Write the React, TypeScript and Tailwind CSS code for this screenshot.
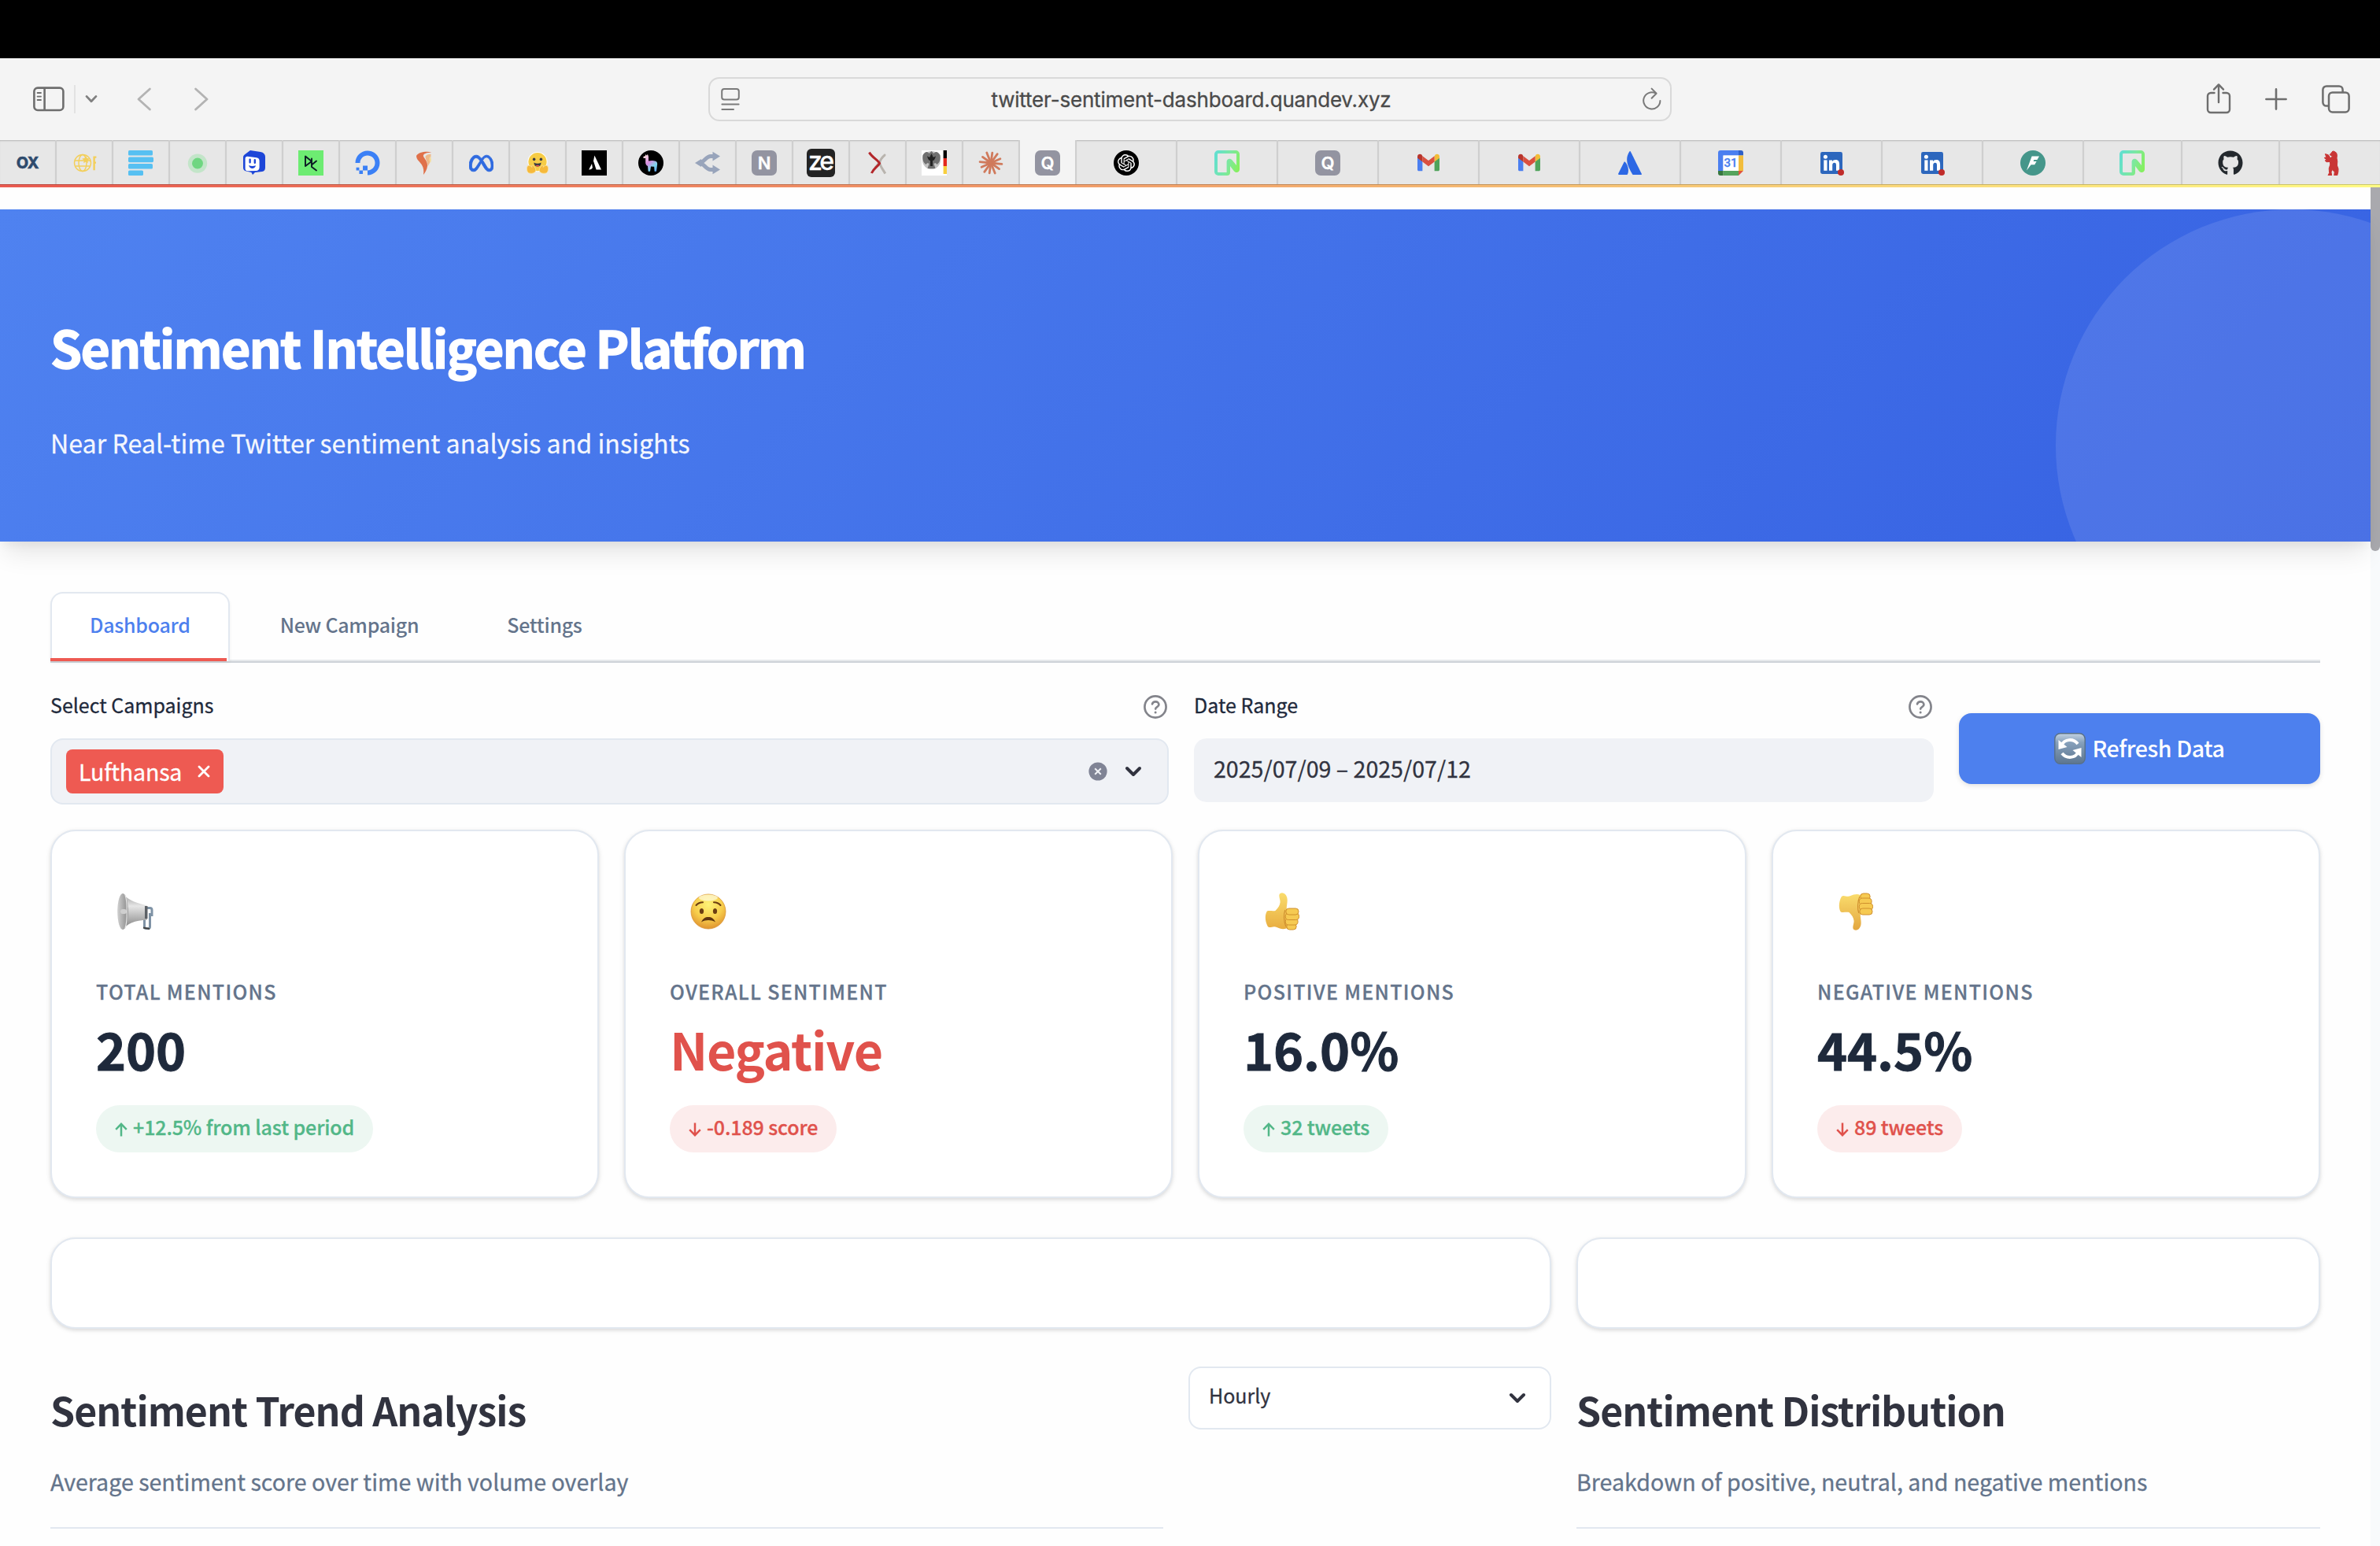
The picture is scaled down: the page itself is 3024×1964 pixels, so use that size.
import type { ReactNode } from "react";
import { FaAtlassian, FaDigitalOcean, FaGithub } from "react-icons/fa";
import { SiMeta, SiOpenai } from "react-icons/si";

/* ---------- browser toolbar icons ---------- */

function SidebarIcon() {
  return (
    <svg className="h-[32px] w-[40px]" viewBox="0 0 40 32" fill="none" stroke="#6e6e6e" strokeWidth="2.6">
      <rect x="1.4" y="1.6" width="37" height="28.4" rx="4.5" />
      <path d="M14.6 2v28" />
      <path d="M5.6 8h4.4M5.6 12.6h4.4M5.6 17h4.4" strokeWidth="1.8" strokeLinecap="round" />
    </svg>
  );
}

function ReaderIcon() {
  return (
    <svg className="h-[30px] w-[24px]" viewBox="0 0 24 30" fill="none" stroke="#7a7a7a" strokeWidth="2" strokeLinecap="round">
      <rect x="1.2" y="2" width="21.6" height="13.4" rx="3" />
      <path d="M1.4 21.4h21.2M1.4 28h14.6" />
    </svg>
  );
}

function ReloadIcon() {
  return (
    <svg className="h-[30px] w-[24px]" viewBox="0 0 24 30" fill="none" stroke="#7a7a7a" strokeWidth="2" strokeLinecap="round" strokeLinejoin="round">
      <path d="M16.6 7.4A10.6 10.6 0 1 0 22.4 17" />
      <path d="M11.6 1.6l6 6.2-6 6" />
    </svg>
  );
}

function ShareIcon() {
  return (
    <svg className="h-[40px] w-[32px]" viewBox="0 0 32 40" fill="none" stroke="#6e6e6e" strokeWidth="2.4" strokeLinecap="round" strokeLinejoin="round">
      <path d="M10.5 13H6a4 4 0 0 0-4 4v17a4 4 0 0 0 4 4h20a4 4 0 0 0 4-4V17a4 4 0 0 0-4-4h-4.5" />
      <path d="M16 25V3M10 8.6L16 2.4l6 6.2" />
    </svg>
  );
}

function PlusIcon() {
  return (
    <svg className="h-[28px] w-[28px]" viewBox="0 0 28 28" fill="none" stroke="#6e6e6e" strokeWidth="2.6" strokeLinecap="round">
      <path d="M14 1.4v25.2M1.4 14h25.2" />
    </svg>
  );
}

function TabsIcon() {
  return (
    <svg className="h-[36px] w-[36px]" viewBox="0 0 36 36" fill="none" stroke="#6e6e6e" strokeWidth="2.5">
      <rect x="9" y="9.4" width="25.6" height="25" rx="4.6" />
      <path d="M9 26.6H6A4.5 4.5 0 0 1 1.4 22V6A4.6 4.6 0 0 1 6 1.4h16A4.6 4.6 0 0 1 26.6 6v3.4" />
    </svg>
  );
}

/* ---------- favicons ---------- */

const Fav = ({ children }: { children: ReactNode }) => (
  <svg className="h-[32px] w-[32px]" viewBox="0 0 32 32" fill="none">
    {children}
  </svg>
);

const LetterIcon = ({ letter }: { letter: string }) => (
  <span className="flex h-[32px] w-[32px] items-center justify-center rounded-[7px] bg-[#9394a1] font-['Inter'] text-[22px] leading-none font-semibold text-white">
    {letter}
  </span>
);

const GlobeIcon = () => (
  <Fav>
    <g stroke="#f3cf5b" strokeWidth="1.4">
      <circle cx="14" cy="16" r="10.5" />
      <ellipse cx="14" cy="16" rx="5" ry="10.5" />
      <path d="M4 13h20M5 20h18" />
    </g>
    <path d="M18 7l1.6 3 3.4.6-2.6 2.2.4 3.4-2.8-1.8-2.8 1.8.6-3.4-2.6-2.2 3.2-.6z" fill="#f3cf5b" />
    <path d="M28.6 7.6v17.6M28.6 8.6h2.8M28.6 15.6h2.4" stroke="#f3cf5b" strokeWidth="2.4" />
  </Fav>
);

const BarsIcon = () => (
  <Fav>
    <g fill="#56c0f2">
      <rect x="0" y="0" width="31" height="6.6" rx="1.6" />
      <rect x="0" y="8.6" width="32" height="6.6" rx="1.6" />
      <rect x="0" y="17" width="31" height="6.6" rx="1.6" />
      <rect x="0" y="25.4" width="19" height="6.6" rx="1.6" />
    </g>
  </Fav>
);

const DotIcon = () => (
  <Fav>
    <circle cx="16" cy="16.6" r="12.2" fill="#c3e5c9" />
    <circle cx="16" cy="16.6" r="7" fill="#6fd681" />
  </Fav>
);

const BoxFaceIcon = () => (
  <Fav>
    <path d="M5 4.5L11 0l13 2c4 .8 6 3 6 6v14c0 3-1.4 4.4-4 5l-9 1-3 3-1.6-3L6 26.6C3.4 26 2 24.6 2 22V9c0-2 1-3.400 3-4.500z" fill="#1d46d8" />
    <path d="M4.600 10.500c0-2 1.400-3 3-2.700L19 9.200c2.400.4 3.600 1.600 3.600 4v8c0 2.800-1.200 4.400-3.600 4.800l-11 .2c-2.200 0-3.400-1-3.400-3z" fill="#fff" />
    <path d="M10.600 11.600v3.600M16.800 12.200v3.600" stroke="#1d46d8" strokeWidth="2.4" strokeLinecap="round" />
    <path d="M9 19c3 1.200 6 1.200 9 .2-.6 2.600-2.400 3.800-4.400 3.800S9.800 21.600 9 19z" fill="#1d46d8" />
  </Fav>
);

const GreenKIcon = () => (
  <Fav>
    <rect width="32" height="32" fill="#6dec72" />
    <path d="M9 7.500v12.600l8-6.200zM17 10.500v10.500l6 4.500M17 18.500l6-5" stroke="#0c1a24" strokeWidth="1.900" strokeLinecap="round" strokeLinejoin="round" />
  </Fav>
);

const FlameIcon = () => (
  <Fav>
    <path d="M6 7c2.400-4.600 12-6.400 19.400-4.600-6 .4-11.400 1.600-10.400 5.200 1 3 5.600 6.400 5 12.400-.4 4-2.400 7.600-5 11 .6-5 .4-8.600-2-12.600C11 15 6 12 6 7z" fill="#e0714a" />
    <path d="M17.600 7.400c2-2 4.600-2.600 7-2.600-.4 6-.6 11-4 15.600.4-5-3.600-9.400-3-13z" fill="#efb98a" />
    <path d="M23 8c2 1 2.400 4 1 8-1.600-2-2-5-1-8z" fill="#f4dc9a" />
  </Fav>
);

const HugIcon = () => (
  <Fav>
    <circle cx="16" cy="14.600" r="12.600" fill="#fff" />
    <circle cx="16" cy="14.600" r="11.600" fill="#f6cc46" />
    <circle cx="11.600" cy="11.400" r="1.800" fill="#3a3b45" />
    <circle cx="20.400" cy="11.400" r="1.800" fill="#3a3b45" />
    <path d="M11.400 15.600c3 1.600 6.200 1.600 9.200 0-.2 3.400-2 5.200-4.600 5.200s-4.400-1.800-4.600-5.200z" fill="#3a3b45" />
    <path d="M13.600 19.600c1.400-1 3.400-1 4.800 0-1.200 1.400-3.600 1.400-4.800 0z" fill="#ef5350" />
    <path d="M3 20.600c-1 2-.8 7.600 2.600 8.400 4 .8 7.400-.2 8.200-3.400.4-2.600-1.800-4.600-3.600-6.600-1.200-.6-1.800.6-1.200 2.400-2-2-4.800-3.400-6-.8zM29 20.600c1 2 .8 7.600-2.600 8.400-4 .8-7.400-.2-8.200-3.400-.4-2.600 1.800-4.600 3.600-6.600 1.200-.6 1.800.6 1.200 2.400 2-2 4.800-3.400 6-.8z" fill="#f6b93b" stroke="#fbe3a0" strokeWidth=".8" />
  </Fav>
);

const AIcon = () => (
  <Fav>
    <rect width="32" height="32" fill="#000" />
    <path d="M16.400 6.500L25 24.500h-6.400l-3.600-11z" fill="#fff" />
    <path d="M13 17l.8 4.500c.2 1.500-1.500 3-4.600 3z" fill="#fff" />
  </Fav>
);

const LlamaIcon = () => (
  <Fav>
    <defs>
      <linearGradient id="llama" x1="8" y1="6" x2="25" y2="26" gradientUnits="userSpaceOnUse">
        <stop offset="0" stopColor="#f7e3da" />
        <stop offset=".4" stopColor="#d88be0" />
        <stop offset=".7" stopColor="#7fd6ec" />
        <stop offset="1" stopColor="#5a9bf0" />
      </linearGradient>
    </defs>
    <circle cx="16" cy="16" r="16" fill="#000" />
    <path d="M9 5l1.400 1.600L12 5l1 3v5.600c3-.6 6-.8 9 .2 2 .6 2.600 3 2 5l-1 8h-2.400l-.4-6-4.200-.4-1 6.400h-2.400l-.6-6.800C9.400 19 9 16.600 9.200 14V10H6.600l-.2-2L9 7z" fill="url(#llama)" />
  </Fav>
);

const ForkIcon = () => (
  <Fav>
    <path d="M23 7.500h-3c-6.500 0-8 8.500-15.500 8.500C12 16 13.500 24.500 20 24.500h3" stroke="#98a4bb" strokeWidth="5" />
    <path d="M0 16l8-5v10zM22.500 1.800L32 7.500l-9.500 6zM22.500 18.500l9.500 6-9.500 5.800z" fill="#98a4bb" />
  </Fav>
);

const CrossIcon = () => (
  <Fav>
    <path d="M25.600 5.600c-3 2.400-6 6.200-6.800 9.400-.6 4 3.600 8.400 7 14.400" stroke="#b9b4ae" strokeWidth="3" />
    <path d="M26 5c-6 6-9 12-13.600 17" stroke="#b9b4ae" strokeWidth="2" />
    <path d="M5.400 2.600C9.400 9 17 13 18.600 16.500 16 21 11 23 8.400 29" stroke="#b3272b" strokeWidth="3" strokeLinejoin="round" />
  </Fav>
);

const EagleIcon = () => (
  <Fav>
    <rect width="32" height="32" fill="#fff" />
    <ellipse cx="12.500" cy="12.500" rx="11.500" ry="11.500" fill="#c4c4c4" />
    <path d="M1.500 6c3-5 6-5 8-2l3-3 3 3c2-3 5-3 8 2 1 5-1 10-4 12-1-2-3-2-4-1l2 6h-10l2-6c-1-1-3-1-4 1-3-2-5-7-4-12z" fill="#707070" />
    <path d="M7 7c2 2 4 2 4 0l1.500-3L14 7c0 2 2 2 4 0-1 4-2 6-4 6v7h-3v-7c-2 0-3-2-4-6z" fill="#222" />
    <rect x="27.600" width="4.400" height="10" fill="#000" />
    <rect x="27.600" y="10" width="4.400" height="10" fill="#e3281d" />
    <rect x="27.600" y="20" width="4.400" height="10" fill="#f8cf3e" />
  </Fav>
);

const rays = [0, 28, 58, 88, 118, 150, 180, 208, 238, 268, 298, 330];
const BurstIcon = () => (
  <Fav>
    <g stroke="#d07a5c" strokeWidth="2.800" strokeLinecap="round">
      {rays.map((r, i) => (
        <path key={r} d={i % 2 ? "M16 16V2" : "M16 16V3"} transform={`rotate(${r + 8} 16 16)`} />
      ))}
    </g>
  </Fav>
);

const NeonIcon = ({ id }: { id: string }) => (
  <Fav>
    <defs>
      <linearGradient id={id} x1="0" y1="10" x2="32" y2="20" gradientUnits="userSpaceOnUse">
        <stop offset="0" stopColor="#62dfd0" />
        <stop offset=".55" stopColor="#7ce8a0" />
        <stop offset="1" stopColor="#86f05c" />
      </linearGradient>
    </defs>
    <path
      fillRule="evenodd"
      d="M5 0h22a5 5 0 0 1 5 5v19c0 4-4.800 5.400-7.200 2.200L20 20v8a4 4 0 0 1-4 4H5a5 5 0 0 1-5-5V5a5 5 0 0 1 5-5zm0 4a1 1 0 0 0-1 1v22a1 1 0 0 0 1 1h10.600V14.600c0-4 4.600-5 7-2L28 19V5c0-.8 0-1-1-1z"
      fill={`url(#${id})`}
    />
  </Fav>
);

const GmailIcon = () => (
  <Fav>
    <path d="M2 9v15.400c0 1 .8 1.800 1.800 1.800H8.400V14z" fill="#4b7ff0" />
    <path d="M30 9v15.400c0 1-.8 1.800-1.800 1.800h-4.600V14z" fill="#4fa35b" />
    <path d="M23.600 7.400V14.400L30 9.800V8c0-3-3.200-4-5.400-2.400z" fill="#f1bc37" />
    <path d="M8.400 14.400V7.200L16 13l7.600-5.800v7.200L16 20.200z" fill="#da4f3f" />
    <path d="M2 8v1.800l6.400 4.800V7.400l-1-1.800C5.200 4 2 5 2 8z" fill="#b8352c" />
  </Fav>
);

const CalendarIcon = () => (
  <span className="relative flex h-[32px] w-[32px] items-center justify-center">
    <svg className="absolute inset-0 h-[32px] w-[32px]" viewBox="0 0 32 32">
      <path d="M3 0h23v6.500H6.500V26H0V3a3 3 0 0 1 3-3z" fill="#4b7ff0" />
      <path d="M26 0h3a3 3 0 0 1 3 3v3.500h-6z" fill="#2f60c8" />
      <path d="M26 6.500h6V26h-6z" fill="#f2bd3c" />
      <path d="M6.500 26H26v6H6.500z" fill="#55a35c" />
      <path d="M0 26h6.500v6H3a3 3 0 0 1-3-3z" fill="#37783f" />
      <path d="M26 26h6l-6 6z" fill="#e0533f" />
      <path d="M6.500 6.500H26V26H6.500z" fill="#fff" />
    </svg>
    <span className="relative font-['Roboto'] text-[15px] leading-none font-medium text-[#4b7ff0]">31</span>
  </span>
);

const LinkedInIcon = () => (
  <Fav>
    <rect x="2" y="2" width="28" height="28" rx="2.400" fill="#2d67bd" />
    <g fill="#fff">
      <circle cx="8.400" cy="8.200" r="2.500" />
      <rect x="6.300" y="12.400" width="4.200" height="13.400" />
      <path d="M13 12.400h4v1.900c.8-1.400 2.200-2.200 4.200-2.200 4 0 4.900 2.600 4.900 6.200v7.500H22v-6.700c0-1.700-.2-3.400-2.200-3.400s-2.600 1.500-2.600 3.300v6.800H13z" />
    </g>
    <circle cx="28" cy="28" r="4" fill="#c02c2a" />
  </Fav>
);

const BoltIcon = () => (
  <Fav>
    <circle cx="16" cy="16" r="16" fill="#45968a" />
    <path d="M14.600 7.400h9.400l-2.600 4.600h-4l-.8 2h4l-2.400 4.200h-4.600L8 25.600z" fill="#fff" />
  </Fav>
);

const BearIcon = () => (
  <Fav>
    <path d="M15.500 2.800L17 1l2 .4 2.600 1.800.8 3-.4 3.800.8 4-.4 5 1.600 4.500-.2 4-1.200 4.500h-3.800l.4-4.500-2.800-3-1.400 3 .6 4.500H11l1.600-3.500-.4-5.500 1.600-5-.4-3.500-4.400.2-1.800-1.800 2-1-3-2.400 2.600-.8L7.400 4.600l4 1.200 2.600 4 2.600-2-3.400-2.200z" fill="#c93434" stroke="#c93434" strokeWidth="1" strokeLinejoin="round" />
  </Fav>
);

const smallTabs: { icon: ReactNode; active?: boolean }[] = [
  { icon: <span className="font-['Inter'] text-[20px] leading-none font-extrabold tracking-[-0.5px] text-[#2f4b6d]">OX</span> },
  { icon: <GlobeIcon /> },
  { icon: <BarsIcon /> },
  { icon: <DotIcon /> },
  { icon: <BoxFaceIcon /> },
  { icon: <GreenKIcon /> },
  { icon: <FaDigitalOcean className="h-[32px] w-[32px] text-[#3b80f6]" /> },
  { icon: <FlameIcon /> },
  { icon: <SiMeta className="h-[31px] w-[31px] stroke-[#2f6ae0] stroke-[0.7] text-[#2f6ae0]" /> },
  { icon: <HugIcon /> },
  { icon: <AIcon /> },
  { icon: <LlamaIcon /> },
  { icon: <ForkIcon /> },
  { icon: <LetterIcon letter="N" /> },
  {
    icon: (
      <span className="flex h-[36px] w-[36px] items-center justify-center rounded-[6px] bg-[#232323] pr-[2px] pb-[5px] font-['Inter'] text-[32px] leading-none font-medium tracking-[-3px] text-white">
        ze
      </span>
    ),
  },
  { icon: <CrossIcon /> },
  { icon: <EagleIcon /> },
  { icon: <BurstIcon /> },
  { icon: <LetterIcon letter="Q" />, active: true },
];

const wideTabs: ReactNode[] = [
  <span className="flex h-[32px] w-[32px] items-center justify-center rounded-full bg-black">
    <SiOpenai className="h-[22px] w-[22px] text-white" />
  </span>,
  <NeonIcon id="neon-a" />,
  <LetterIcon letter="Q" />,
  <GmailIcon />,
  <GmailIcon />,
  <FaAtlassian className="h-[30px] w-[30px] text-[#2d68e4]" />,
  <CalendarIcon />,
  <LinkedInIcon />,
  <LinkedInIcon />,
  <BoltIcon />,
];

const trailingTabs: ReactNode[] = [<NeonIcon id="neon-b" />, <FaGithub className="h-[32px] w-[32px] text-[#24292e]" />, <BearIcon />];

function BrowserChrome() {
  return (
    <>
      <div className="h-[74px] bg-black" />
      <div className="grid h-[104px] grid-cols-[900px_1224px_900px] items-center bg-[#f4f4f4]">
        <div className="flex items-center pl-[42px]">
          <SidebarIcon />
          <span className="ml-[12px] h-[36px] w-[2px] bg-[#e3e3e3]" />
          <svg className="ml-[12px] h-[12px] w-[16px]" viewBox="0 0 16 12" fill="none" stroke="#808080" strokeWidth="2.8" strokeLinecap="round" strokeLinejoin="round">
            <path d="M2 2.400l6 6.400 6-6.400" />
          </svg>
          <svg className="ml-[49px] h-[30px] w-[20px]" viewBox="0 0 20 30" fill="none" stroke="#b3b3b3" strokeWidth="2.800" strokeLinecap="round" strokeLinejoin="round">
            <path d="M17.400 2L3 15l14.400 13" />
          </svg>
          <svg className="ml-[53px] h-[30px] w-[20px]" viewBox="0 0 20 30" fill="none" stroke="#b3b3b3" strokeWidth="2.800" strokeLinecap="round" strokeLinejoin="round">
            <path d="M2.600 2L17 15 2.600 28" />
          </svg>
        </div>
        <div className="flex h-[56px] items-center justify-between rounded-[14px] border-2 border-[#d9d9d9] pr-[11px] pl-[14px]">
          <ReaderIcon />
          <span className="mt-[2px] font-['Inter'] text-[26px] leading-[32px] tracking-[-0.19px] text-[#4a4a4a]">twitter-sentiment-dashboard.quandev.xyz</span>
          <ReloadIcon />
        </div>
        <div className="flex items-center justify-end pr-[38px]">
          <span className="-mt-[3px] flex">
            <ShareIcon />
          </span>
          <span className="ml-[43px] flex">
            <PlusIcon />
          </span>
          <span className="ml-[44px] flex">
            <TabsIcon />
          </span>
        </div>
      </div>
      <div className="flex h-[56px] bg-[#e7e7e7]">
        {smallTabs.map((t, i) => (
          <div
            key={i}
            className={
              t.active
                ? "flex w-[72px] shrink-0 items-center justify-center border-r-2 border-[#cfcfcf] bg-[#f4f4f4] pt-[2px]"
                : "flex w-[72px] shrink-0 items-center justify-center border-r-2 border-[#cfcfcf] pt-[2px] shadow-[inset_0_2px_2px_-1px_rgba(0,0,0,0.22)]"
            }
          >
            {t.icon}
          </div>
        ))}
        {wideTabs.map((icon, i) => (
          <div
            key={i}
            className="flex w-[128px] shrink-0 items-center justify-center border-r-2 border-[#cfcfcf] pt-[2px] shadow-[inset_0_2px_2px_-1px_rgba(0,0,0,0.22)]"
          >
            {icon}
          </div>
        ))}
        {trailingTabs.map((icon, i) => (
          <div
            key={i}
            className="flex flex-1 items-center justify-center border-r-2 border-[#cfcfcf] pt-[2px] shadow-[inset_0_2px_2px_-1px_rgba(0,0,0,0.22)] last:border-r-0 last:pl-[4px]"
          >
            {icon}
          </div>
        ))}
      </div>
      <div className="h-[4px] border-t border-black/20 bg-[linear-gradient(90deg,#ea5a50,#f2a46c_50%,#fffb84)] bg-origin-border" />
    </>
  );
}

/* ---------- dashboard pieces ---------- */

const Chevron = () => (
  <svg className="h-[16px] w-[24px]" viewBox="0 0 24 16" fill="none" stroke="#31333f" strokeWidth="4" strokeLinecap="round" strokeLinejoin="round">
    <path d="M4 4l8 8 8-8" />
  </svg>
);

const HelpIcon = () => (
  <svg className="h-[32px] w-[32px]" viewBox="0 0 32 32" fill="none" stroke="#83848b" strokeWidth="2.700" strokeLinecap="round" strokeLinejoin="round">
    <circle cx="16" cy="16" r="13.600" />
    <path d="M12 12.400c.6-2 2.200-3 4.200-3 2.400 0 4.200 1.600 4.200 3.800 0 2.800-4.200 3-4.200 5.400" />
    <path d="M16.100 22.900v.1" strokeWidth="3" />
  </svg>
);

const Megaphone = () => (
  <svg className="h-[48px] w-[48px]" viewBox="0 0 48 48">
    <defs>
      <linearGradient id="horn" x1="0" y1="0" x2="0" y2="1">
        <stop offset="0" stopColor="#9b9b9b" />
        <stop offset=".35" stopColor="#e6e6e6" />
        <stop offset="1" stopColor="#7e7e7e" />
      </linearGradient>
      <linearGradient id="bell" x1="0" y1="0" x2="1" y2="0">
        <stop offset="0" stopColor="#d0d0d0" />
        <stop offset="1" stopColor="#8a8a8a" />
      </linearGradient>
    </defs>
    <path d="M39 19.500h4.500c1.500 0 2.500 1 2.500 2.500v6.500h-2.500M36.500 28v15c0 1.500.5 2.500 2 2.500h3c1.500 0 2-1 2-2.500V26" fill="none" stroke="#7f93a6" strokeWidth="3" />
    <path d="M35 44.500l8 1.500" stroke="#444" strokeWidth="2" />
    <path d="M9 1c4 6 12 11 31 15.500v18C24 35 14 40 9 47z" fill="url(#horn)" />
    <path d="M37 17h3.500v16H37z" fill="#5d6166" />
    <ellipse cx="9" cy="24" rx="6.800" ry="23" fill="url(#bell)" />
    <path d="M12 3c3 8 3 34 0 42" stroke="#e6e6e6" strokeWidth="1.200" fill="none" />
    <rect x="6" y="21" width="8" height="6" rx="3" fill="#cfcfcf" />
  </svg>
);

const WorriedFace = () => (
  <svg className="h-[46px] w-[46px]" viewBox="0 0 46 46">
    <defs>
      <radialGradient id="face" cx=".5" cy=".3" r=".75">
        <stop offset="0" stopColor="#fdf377" />
        <stop offset=".55" stopColor="#f7cd4b" />
        <stop offset="1" stopColor="#dc8a2c" />
      </radialGradient>
    </defs>
    <circle cx="23" cy="23" r="22" fill="url(#face)" stroke="#d99536" strokeWidth=".8" />
    <ellipse cx="23" cy="5.500" rx="12" ry="4" fill="#fffbe0" opacity=".7" />
    <path d="M7.500 15c2-2.200 5-3.600 8.500-3.700M38.500 15c-2-2.200-5-3.600-8.500-3.700" stroke="#6b3d12" strokeWidth="2" fill="none" strokeLinecap="round" />
    <ellipse cx="14.500" cy="22.500" rx="2.600" ry="3.600" fill="#6b3d12" />
    <ellipse cx="31.500" cy="22.500" rx="2.600" ry="3.600" fill="#6b3d12" />
    <path d="M14 36.500c2-4.600 5-6.500 9-6.500s7 1.900 9 6.500c-3-1.800-6-2.500-9-2.500s-6 .7-9 2.500z" fill="#5f3510" />
  </svg>
);

const Thumb = ({ down }: { down?: boolean }) => (
  <svg className="h-[48px] w-[44px]" viewBox="0 0 46 48" preserveAspectRatio="none">
    <defs>
      <linearGradient id={down ? "thumb-d" : "thumb-u"} x1="0" y1="0" x2="0" y2="1">
        <stop offset="0" stopColor={down ? "#e3a640" : "#fadc6c"} />
        <stop offset="1" stopColor={down ? "#fadc6c" : "#e8ad40"} />
      </linearGradient>
    </defs>
    <g transform={down ? "matrix(1 0 0 -1 0 48)" : undefined}>
      <path
        d="M3 23.500c3-1.200 7 .3 11-.5 4-3.500 6-7 6.500-11C20.500 8 17.500 3 20.500 1c3.500-2 7.500.5 9 5 1.300 5-.5 9.500-.5 14l3 23c-4 4.500-11 3.500-16 1-5-2.500-9 2-12-1C0 36 0 28 3 23.500z"
        fill={down ? "url(#thumb-d)" : "url(#thumb-u)"}
      />
      <g fill="#f6ca52" stroke="#cf8d2c" strokeWidth="1">
        <rect x="29" y="39" width="13" height="8" rx="4" />
        <rect x="27.500" y="32.500" width="16.500" height="8.500" rx="4.200" />
        <rect x="27.500" y="26" width="18" height="8.500" rx="4.200" />
        <rect x="28" y="20" width="17" height="8" rx="4" />
      </g>
      <path d="M27 22c-2 5-2 14 1 21" stroke="#cf8f2e" strokeWidth="1.200" fill="none" />
    </g>
  </svg>
);

const RefreshEmoji = () => (
  <svg className="h-[40px] w-[40px]" viewBox="0 0 40 40">
    <defs>
      <linearGradient id="key" x1="0" y1="0" x2="0" y2="1">
        <stop offset="0" stopColor="#c3d3e2" />
        <stop offset=".3" stopColor="#86a0bb" />
        <stop offset="1" stopColor="#5d7690" />
      </linearGradient>
    </defs>
    <rect x=".8" y=".8" width="38.400" height="38.400" rx="7" fill="url(#key)" stroke="#587089" strokeWidth="1.400" />
    <g fill="none" stroke="#fff" strokeWidth="4">
      <path d="M9.500 15.500C13 8 24 6.500 30 14" />
      <path d="M30.500 24.500C27 32 16 33.500 10 26" />
    </g>
    <path d="M5.500 9v12l11-3zM34.500 31V19l-11 3z" fill="#fff" />
  </svg>
);

const Arrow = ({ down }: { down?: boolean }) => (
  <svg className="mt-[2px] h-[18px] w-[16px]" viewBox="0 0 16 18" fill="none" stroke="currentColor" strokeWidth="2.500">
    <path d={down ? "M8 .5v15.500M1.200 9.200L8 16.200l6.800-7" : "M8 17.500V2M1.200 8.800L8 1.800l6.800 7"} />
  </svg>
);

type Metric = { icon: ReactNode; label: string; value: string; delta: string; up: boolean; negative?: boolean };

const metrics: Metric[] = [
  { icon: <Megaphone />, label: "TOTAL MENTIONS", value: "200", delta: "+12.5% from last period", up: true },
  { icon: <WorriedFace />, label: "OVERALL SENTIMENT", value: "Negative", delta: "-0.189 score", up: false, negative: true },
  { icon: <Thumb />, label: "POSITIVE MENTIONS", value: "16.0%", delta: "32 tweets", up: true },
  { icon: <Thumb down />, label: "NEGATIVE MENTIONS", value: "44.5%", delta: "89 tweets", up: false },
];

const MetricCard = ({ m }: { m: Metric }) => (
  <div className="flex h-[468px] flex-col items-start rounded-[32px] border-2 border-[#e2e8f0] bg-white px-[56px] pt-[54px] shadow-[0_2px_6px_rgba(0,0,0,0.1),0_2px_4px_rgba(0,0,0,0.06)]">
    <div className="flex h-[96px] w-[98px] items-center justify-center">{m.icon}</div>
    <div className="mt-[33px] text-[25px] leading-[40px] font-medium tracking-[1.3px] text-[#64748b]">{m.label}</div>
    <div
      className={
        m.negative
          ? "mt-[13px] text-[64.500px] leading-[80px] font-bold tracking-[-1.250px] text-[#e0524c] [-webkit-text-stroke:0px]"
          : "mt-[13px] text-[64.500px] leading-[80px] font-bold text-[#1e293b] [-webkit-text-stroke:1px]"
      }
    >
      {m.value}
    </div>
    <div
      className={
        m.up
          ? "mt-[32px] flex h-[60px] items-center gap-[7px] rounded-full bg-[#edf7f2] px-[24px] text-[25px] leading-[40px] font-medium tracking-[-0.12px] text-[#52b788]"
          : "mt-[32px] flex h-[60px] items-center gap-[7px] rounded-full bg-[#fcecec] px-[24px] text-[25px] leading-[40px] font-medium tracking-[-0.12px] text-[#e0524c]"
      }
    >
      <Arrow down={!m.up} />
      <span className="-mt-[6px]">{m.delta}</span>
    </div>
  </div>
);

const FieldLabel = ({ children }: { children: ReactNode }) => (
  <div className="mt-[34px] mb-[22px] flex h-[40px] items-center justify-between pr-[1px] text-[25px] leading-[40px] text-[#1e293b]">
    <span className="-mt-[2px]">{children}</span>
    <span className="mt-[4px] flex">
      <HelpIcon />
    </span>
  </div>
);

const SectionTitle = ({ title, subtitle }: { title: string; subtitle: string }) => (
  <div className="h-[206px] border-b-2 border-[#e2e8f0]">
    <h2 className="pt-[14px] text-[50px] leading-[80px] font-bold tracking-[-0.98px] text-[#31333f] [-webkit-text-stroke:0px]">{title}</h2>
    <p className="mt-[28px] text-[28.600px] leading-[48px] text-[#64748b]">{subtitle}</p>
  </div>
);

export default function App() {
  return (
    <div className="h-[1964px] w-[3024px] overflow-hidden bg-[#fefefe] font-['Noto_Sans_CJK_SC','Noto_Sans',sans-serif] [-webkit-text-stroke:0.3px]">
      <BrowserChrome />
      <div className="flex h-[1726px]">
        <div className="w-[3012px] pt-[28px]">
          <header className="relative h-[422px] bg-[linear-gradient(135deg,#4f82f0,#3661e2)] pl-[64px] shadow-[0_20px_30px_-6px_rgba(0,0,0,0.1),0_8px_12px_-4px_rgba(0,0,0,0.05)]">
            <div className="absolute inset-0 overflow-hidden">
              <div className="absolute top-0 -right-[200px] h-[600px] w-[600px] rounded-full bg-white/10" />
            </div>
            <h1 className="pt-[134px] text-[64.500px] leading-[80px] font-bold tracking-[-1.850px] text-white [-webkit-text-stroke:1.400px]">
              Sentiment Intelligence Platform
            </h1>
            <p className="mt-[58px] text-[32.200px] leading-[48px] text-white/95">Near Real-time Twitter sentiment analysis and insights</p>
          </header>

          <main className="px-[64px] pt-[64px]">
            <nav className="flex h-[90px] gap-[16px] border-b-2 border-[#ced3d8] text-[25px] leading-[79px] font-medium tracking-[-0.280px] text-[#64748b] shadow-[inset_0_-2px_0_#e6e9ec] [-webkit-text-stroke:0px]">
              <div className="relative rounded-t-[16px] border-2 border-b-0 border-[#e2e8f0] bg-white px-[48px] text-[#4d80ee] shadow-[0_2px_4px_rgba(0,0,0,0.05)]">
                Dashboard
                <span className="absolute bottom-0 -left-[2px] h-[4px] w-[224px] bg-[#ee5a52]" />
              </div>
              <div className="px-[48px] pt-[2px]">New Campaign</div>
              <div className="px-[48px] pt-[2px]">Settings</div>
            </nav>

            <section className="grid h-[212px] grid-cols-[1421px_940px_459px] gap-x-[32px]">
              <div>
                <FieldLabel>Select Campaigns</FieldLabel>
                <div className="flex h-[84px] items-center rounded-[16px] border-2 border-[#e2e8f0] bg-[#f0f2f6] pr-[31px] pl-[18px]">
                  <div className="flex h-[56px] w-[200px] items-center rounded-[8px] bg-[#ee5a52] pl-[16px] text-[28.600px] leading-[40px] tracking-[-0.2px] text-white">
                    <span className="-mt-[1px]">Lufthansa</span>
                    <svg className="ml-[20px] h-[16px] w-[16px]" viewBox="0 0 16 16" stroke="#fff" strokeWidth="2.800" strokeLinecap="round">
                      <path d="M2 2l12 12M14 2L2 14" />
                    </svg>
                  </div>
                  <svg className="ml-auto h-[24px] w-[24px]" viewBox="0 0 24 24">
                    <circle cx="12" cy="12" r="11.600" fill="#808495" />
                    <path d="M8.200 8.200l7.600 7.600M15.800 8.200l-7.600 7.600" stroke="#f0f2f6" strokeWidth="2" />
                  </svg>
                  <span className="ml-[21px] flex">
                    <Chevron />
                  </span>
                </div>
              </div>
              <div>
                <FieldLabel>Date Range</FieldLabel>
                <div className="h-[81px] rounded-[16px] bg-[#f0f2f6] pl-[25px] text-[28.600px] leading-[76px] text-[#31333f]">2025/07/09 – 2025/07/12</div>
              </div>
              <button className="mt-[64px] flex h-[90px] items-center justify-center gap-[8px] rounded-[16px] bg-[#4d80ee] text-[28.600px] leading-[40px] font-medium tracking-[-0.4px] text-white shadow-[0_2px_6px_rgba(0,0,0,0.12)] [-webkit-text-stroke:0px]">
                <RefreshEmoji />
                <span className="-mt-[2px]">Refresh Data</span>
              </button>
            </section>

            <section className="grid grid-cols-4 gap-[32px]">
              {metrics.map((m) => (
                <MetricCard key={m.label} m={m} />
              ))}
            </section>

            <section className="mt-[50px] grid grid-cols-[1907px_945px] gap-[32px]">
              <div className="h-[116px] rounded-[32px] border-2 border-[#e2e8f0] bg-white shadow-[0_2px_6px_rgba(0,0,0,0.1),0_2px_4px_rgba(0,0,0,0.06)]" />
              <div className="h-[116px] rounded-[32px] border-2 border-[#e2e8f0] bg-white shadow-[0_2px_6px_rgba(0,0,0,0.1),0_2px_4px_rgba(0,0,0,0.06)]" />
            </section>

            <section className="mt-[48px] grid grid-cols-[1414px_461px_945px] items-start gap-[32px]">
              <SectionTitle title="Sentiment Trend Analysis" subtitle="Average sentiment score over time with volume overlay" />
              <div className="flex h-[80px] items-center justify-between rounded-[16px] border-2 border-[#e2e8f0] bg-white pr-[29px] pl-[24px] text-[25px] leading-[40px] text-[#31333f]">
                <span className="-mt-[8px]">Hourly</span>
                <Chevron />
              </div>
              <SectionTitle title="Sentiment Distribution" subtitle="Breakdown of positive, neutral, and negative mentions" />
            </section>
          </main>
        </div>
        <div className="w-[12px] bg-[#f8fafc]">
          <div className="h-[462px] rounded-b-[6px] bg-[#a9a9ae]" />
        </div>
      </div>
    </div>
  );
}
